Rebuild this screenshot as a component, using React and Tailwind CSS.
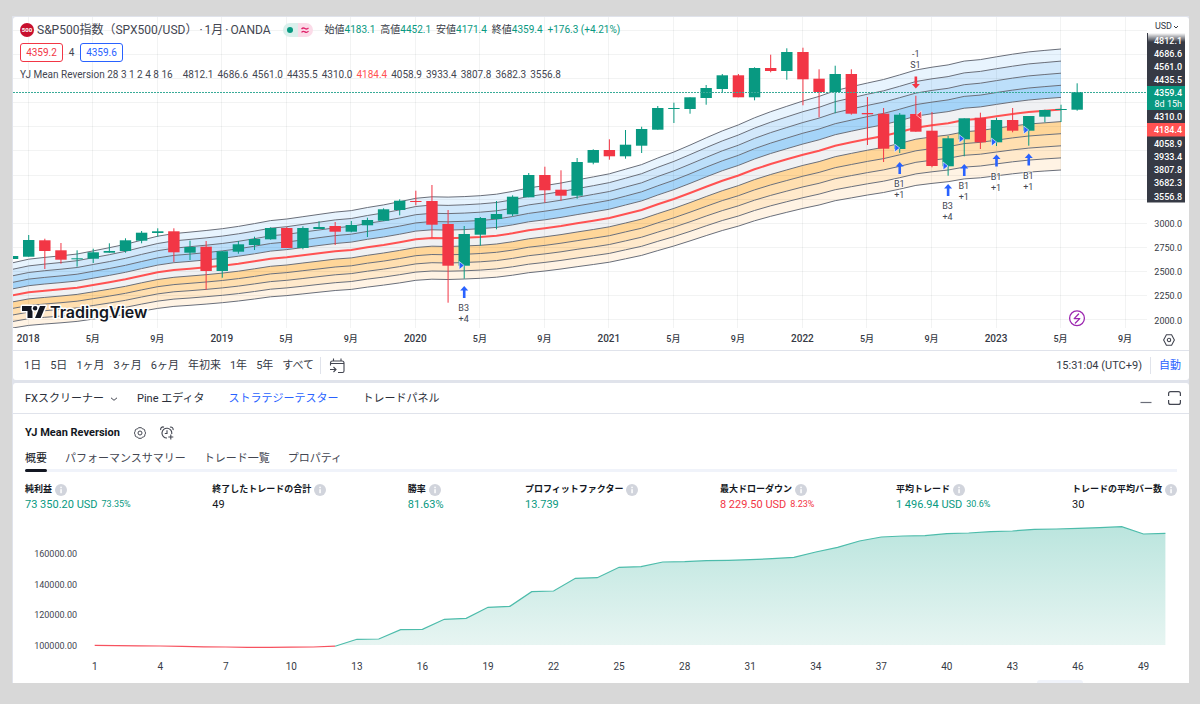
import { clsx } from 'clsx'

const GREEN = '#089981'
const RED = '#f23645'
const BLUE = '#2962ff'

// [open, close, high, low] in chart units, one per month from Dec 2017
const candles = [
  [259, 256, 256, 259], [256.7, 240, 235, 256.7], [240.3, 251, 238.7, 269], [250.3, 259.7, 243, 263.7],
  [259.3, 258.3, 250.3, 266.7], [258.7, 252.3, 248.7, 263], [252.7, 251, 243.3, 252.7], [251, 240.3, 238.3, 252.7],
  [240.7, 232.7, 231, 243.3], [233, 231.3, 228.3, 236.7], [231.3, 252.3, 228.3, 262], [252.7, 247, 240.7, 260],
  [246.7, 271, 241, 289.7], [271, 251.3, 251, 277.7], [251.7, 244.3, 241, 253.7], [245, 239, 236.7, 250],
  [239.3, 228, 227.3, 239.7], [228, 248, 227, 248], [248, 228, 226.3, 249.3], [229, 227, 221.3, 229],
  [226, 231.7, 222, 245], [231.7, 225, 221, 232.3], [225.3, 220, 217.7, 237], [220.7, 209.3, 208.3, 221],
  [210, 200.7, 199.3, 215.3], [201, 202, 190.7, 205.3], [201, 224.7, 185, 237.7], [224, 265.7, 210, 302.7],
  [265.7, 234, 226, 278.7], [234.7, 218, 217, 245.7], [219, 214, 201, 229.3], [214.3, 196.7, 195.3, 216],
  [197.3, 175, 173, 197.3], [175, 190.3, 166.7, 202.7], [189.7, 195.7, 170.3, 200.7], [195.7, 162, 158, 198.7],
  [162.7, 150, 149.3, 164.3], [150, 156.3, 139.3, 159.7], [156.3, 144.7, 130, 158.7], [145.7, 129, 126.7, 153],
  [129.7, 108, 106, 129.7], [108.8, 108, 102.7, 123], [109, 97.3, 97.3, 113.7], [98, 88, 85, 104.7],
  [89, 75.3, 74, 92], [75.3, 97.3, 74, 97.3], [97.3, 68, 67.3, 100.3], [68, 71, 54.7, 72.3],
  [71, 52, 48.3, 79.7], [52, 79.3, 47.7, 105.3], [78.7, 92, 69.3, 117.3], [92, 74, 65.7, 113.3],
  [74, 113.7, 69.3, 114.7], [113, 114.3, 97, 145], [113.7, 148.7, 108, 162], [149, 114.7, 113, 153],
  [114, 131.7, 95.7, 131.7], [130.7, 166, 112, 167.3], [166.3, 138.3, 136, 175.7], [139.3, 118.3, 118.3, 156.3],
  [117.7, 142.3, 112.7, 149], [142.3, 120, 117.7, 146], [120, 130.7, 108, 132.3], [130.7, 116, 116, 145.7],
  [116.7, 110, 109.7, 122.3], [110, 109, 104.7, 122], [109.7, 92, 83.3, 110.7],
]

const mean = [
  295.4, 292.3, 290.7, 289.3, 287.7, 285, 282.3, 279.3, 275.7, 272.3, 270, 268.7, 267.3, 265.7, 263.7, 261.3, 258.7,
  257.3, 255.3, 253.3, 251.3, 250, 247.3, 245, 242.3, 239.3, 238, 238.3, 237.8, 237, 235.7, 233.3, 230.3, 228.3, 226,
  223.3, 220.7, 218, 214, 210, 204.3, 199, 193, 186.7, 180.7, 175.5, 169.3, 164, 159.3, 154.7, 150.7, 145.7, 142.3,
  139, 136, 132, 127.7, 125.3, 123.3, 120, 118.7, 116.3, 114, 112, 110.7, 109.5,
]

const monthX = (i) => 28.7 + 16.13 * i
const priceY = (p) => 320 - (p - 2000) * 0.09633
const yPrice = (y) => 2000 + (320 - y) / 0.09633

// each band sits 3% of the mean away from the previous one
const bandPoints = (k) => mean.map((y, i) => `${monthX(i - 1).toFixed(1)},${priceY(yPrice(y) * (1 + k * 0.03)).toFixed(1)}`)

const bandFills = [
  [4, 5, '#e8f4fe'], [3, 4, '#d2e8fb'], [2, 3, '#bcdffa'], [1, 2, '#a5d4f8'], [-1, 1, '#f0f1f3'],
  [-2, -1, '#ffd699'], [-3, -2, '#ffdfb0'], [-4, -3, '#ffe9cb'], [-5, -4, '#fff3e4'],
]

const months = ['2018', '5月', '9月', '2019', '5月', '9月', '2020', '5月', '9月', '2021', '5月', '9月', '2022', '5月', '9月', '2023', '5月', '9月']

const buys = [
  { i: 27, y: 286, mark: 265.5, label: 'B3', qty: '+4' },
  { i: 54, y: 162, mark: 148, label: 'B1', qty: '+1' },
  { i: 57, y: 184, mark: 166, label: 'B3', qty: '+4' },
  { i: 58, y: 164, mark: 138.7, label: 'B1', qty: '+1' },
  { i: 60, y: 154.5, mark: 142, label: 'B1', qty: '+1' },
  { i: 62, y: 153.5, mark: 130, label: 'B1', qty: '+1' },
]

const priceChips = [
  ['4812.1', 40], ['4686.6', 53], ['4561.0', 66], ['4435.5', 79], ['4310.0', 116.5], ['4058.9', 143],
  ['3933.4', 156], ['3807.8', 169], ['3682.3', 182.5], ['3556.8', 196],
]

const equity = [
  645.4, 645.6, 645.8, 646, 646.4, 646.8, 647, 647.4, 647.4, 647.2, 647, 646.2, 639.3, 639, 629.7, 629.3, 619.3, 618.3,
  607.3, 606.3, 591.7, 591, 578.3, 577.7, 567.3, 566.7, 562, 561.7, 560.7, 560.3, 559.7, 558.7, 557.3, 552, 547.3, 541,
  537, 536, 535.7, 533.7, 533, 531.7, 531, 529.3, 529, 528.3, 527.7, 526.7, 534, 533.3,
]

const metrics = [
  { label: '純利益', value: '73 350.20 USD', pct: '73.35%', tone: 'text-[#089981]' },
  { label: '終了したトレードの合計', value: '49', tone: 'text-[#131722]' },
  { label: '勝率', value: '81.63%', tone: 'text-[#089981]' },
  { label: 'プロフィットファクター', value: '13.739', tone: 'text-[#089981]' },
  { label: '最大ドローダウン', value: '8 229.50 USD', pct: '8.23%', tone: 'text-[#f23645]' },
  { label: '平均トレード', value: '1 496.94 USD', pct: '30.6%', tone: 'text-[#089981]' },
  { label: 'トレードの平均バー数', value: '30', tone: 'text-[#131722]' },
]

function Candle({ i, data }) {
  const [open, close, high, low] = data
  const color = close > open ? RED : GREEN
  const x = monthX(i)
  return (
    <g fill={color}>
      <rect x={x - 0.5} y={high} width="1" height={low - high} />
      <rect x={x - 5.7} y={Math.min(open, close)} width="11.4" height={Math.max(Math.abs(close - open), 1)} />
    </g>
  )
}

function MarkText({ x, y, children }) {
  return (
    <text x={x} y={y} textAnchor="middle" fontSize="9" fill="#434651" stroke="#fff" strokeWidth="2" strokeOpacity="0.6" paintOrder="stroke">{children}</text>
  )
}

function PriceChart() {
  return (
    <svg viewBox="13 17 1176 333" className="block w-full h-auto" role="img" aria-label="S&P500指数">
      <defs>
        <clipPath id="plot"><rect x="13" y="17" width="1134" height="311" /></clipPath>
        <linearGradient id="fade" x1="0" y1="0" x2="0" y2="1">
          <stop offset="0" stopColor="#fff" />
          <stop offset="1" stopColor="#fff" stopOpacity="0" />
        </linearGradient>
      </defs>

      <g clipPath="url(#plot)">
        {bandFills.map(([lo, hi, fill]) => (
          <polygon key={lo} points={[...bandPoints(hi), ...bandPoints(lo).reverse()].join(' ')} fill={fill} />
        ))}
        <g stroke="#2a2e39" strokeOpacity="0.06">
          {months.map((_, n) => <line key={n} x1={Math.round(monthX(n * 4)) - 0.5} x2={Math.round(monthX(n * 4)) - 0.5} y1="17" y2="328" />)}
          {Array.from({ length: 13 }, (_, n) => <line key={n} x1="13" x2="1147" y1={Math.round(priceY(2000 + n * 250)) - 0.5} y2={Math.round(priceY(2000 + n * 250)) - 0.5} />)}
        </g>
        {[5, 4, 3, 2, 1, -1, -2, -3, -4, -5].map(k => (
          <polyline key={k} points={bandPoints(k).join(' ')} fill="none" stroke="#6a6f7a" strokeWidth="1" />
        ))}
        <polyline points={bandPoints(0).join(' ')} fill="none" stroke="#ff5252" strokeWidth="2" />
        {candles.map((c, n) => <Candle key={n} i={n - 1} data={c} />)}
      </g>
      <line x1="13" x2="1147" y1="92.5" y2="92.5" stroke="#39ab98" strokeWidth="1" strokeDasharray="2 1" />

      {buys.map(({ i, y, mark, label, qty }) => {
        const x = monthX(i)
        return (
          <g key={i}>
            <path d={`M${x} ${y} l4 4.5 h-2.7 v7.5 h-2.6 v-7.5 h-2.7 z`} fill={BLUE} />
            <path d={`M${x - 5} ${mark - 4} l5 4 l-5 4 z`} fill={BLUE} stroke="#fff" strokeWidth="0.6" />
            <MarkText x={x - 0.5} y={y + 25}>{label}</MarkText>
            <MarkText x={x - 0.5} y={y + 36}>{qty}</MarkText>
          </g>
        )
      })}
      <MarkText x={monthX(55)} y={57}>-1</MarkText>
      <MarkText x={monthX(55) - 0.5} y={68}>S1</MarkText>
      <path d={`M${monthX(55)} 88.5 l-4 -4.5 h2.7 v-7.5 h2.6 v7.5 h2.7 z`} fill={RED} />
      <path d={`M${monthX(55) + 5.5} 111 l-5 4 l5 4 z`} fill={RED} stroke="#fff" strokeWidth="0.6" />

      {/* watermark */}
      <g fill="#131722" stroke="#fff" strokeWidth="3" strokeLinejoin="round" paintOrder="stroke">
        <path d="M22 306 h10.5 v12 h-5 v-7 h-5.5 z" />
        <circle cx="35.2" cy="308.3" r="2.3" />
        <path d="M40 306 h5.6 l-5 12 h-5.6 z" />
        <text x="50" y="317.5" fontSize="16" fontWeight="600" className="font-['Inter',sans-serif]">TradingView</text>
      </g>

      <g fill="none" stroke="#9c27b0" strokeWidth="1.3">
        <circle cx="1077" cy="318.3" r="7.4" fill="#fff" />
        <path d="M1078.6 314 l-4.4 4.6 h5.6 l-4.4 4.4" strokeLinejoin="round" strokeLinecap="round" />
      </g>

      <g fill="#363a45" textAnchor="middle">
        {months.map((m, n) => (
          <text key={n} x={monthX(n * 4) - 0.5} y="342" fontSize={m.length > 3 ? 10 : 9} fontWeight="500">{m}</text>
        ))}
      </g>

      <g fontSize="9" textAnchor="end">
        {[3000, 2750, 2500, 2250, 2000].map(p => (
          <text key={p} x="1182" y={priceY(p) + 3.5} fill="#363a45">{p.toFixed(1)}</text>
        ))}
        <rect x="1147" y="33" width="38" height="169.5" fill="#363a45" />
        <rect x="1147" y="86" width="38" height="24" fill={GREEN} />
        <rect x="1147" y="123" width="38" height="13.5" fill="#ff5252" />
        <g fill="#fff" fontWeight="500">
          {priceChips.map(([p, y]) => <text key={p} x="1182" y={y + 3.5}>{p}</text>)}
          <text x="1182" y="96">4359.4</text>
          <text x="1182" y="107" fontWeight="400">8d 15h</text>
          <text x="1182" y="133">4184.4</text>
        </g>
        <rect x="1148" y="33" width="38" height="9" fill="url(#fade)" />
      </g>
    </svg>
  )
}

function Quote({ name, value }) {
  return <span><span className="text-[#363a45]">{name}</span>{value}</span>
}

function Legend() {
  return (
    <div className="absolute left-[7px] top-0 text-[10px] text-[#434651] whitespace-nowrap">
      <div className="flex items-center h-[25px]">
        <svg viewBox="0 0 14 14" className="w-[14px] h-[14px]">
          <circle cx="7" cy="7" r="7" fill="#c8102e" />
          <text x="7" y="9.3" textAnchor="middle" fontSize="6" fontWeight="700" fill="#fff">500</text>
        </svg>
        <h1 className="ml-[3px] flex gap-[2px] text-[12px]">
          <span>S&amp;P500指数（SPX500/USD）</span><span>·</span><span>1月</span><span>·</span><span>OANDA</span>
        </h1>
        <div className="ml-3 flex h-[14px] w-[30px] overflow-hidden rounded-full">
          <span className="flex flex-1 items-center justify-center bg-[#daf0ec]"><span className="h-[6px] w-[6px] rounded-full bg-[#089981]" /></span>
          <span className="flex flex-1 items-center justify-center bg-[#fbdbe8]">
            <svg viewBox="0 0 8 8" className="w-2 h-2" fill="none" stroke="#e0246b" strokeWidth="1.3"><path d="M.5 3 q1.7 -1.8 3.5 -.5 t3.5 -.7 M.5 6.4 q1.7 -1.8 3.5 -.5 t3.5 -.7" /></svg>
          </span>
        </div>
        <div className="ml-3 flex gap-[5px] text-[#089981]">
          <Quote name="始値" value="4183.1" />
          <Quote name="高値" value="4452.1" />
          <Quote name="安値" value="4171.4" />
          <Quote name="終値" value="4359.4" />
          <span>+176.3 (+4.21%)</span>
        </div>
      </div>
      <div className="mt-px flex h-[19px] items-stretch">
        <button className="w-[43px] rounded-[3px] border border-[#f23645] bg-white text-[#f23645]">4359.2</button>
        <span className="w-[17px] self-center text-center">4</span>
        <button className="w-[43px] rounded-[3px] border border-[#2962ff] bg-white text-[#2962ff]">4359.6</button>
      </div>
      <div className="mt-[5px] flex h-[15px] items-center">
        <span>YJ Mean Reversion 28 3 1 2 4 8 16</span>
        <span className="ml-[10px] flex gap-1">
          {['4812.1', '4686.6', '4561.0', '4435.5', '4310.0', '4184.4', '4058.9', '3933.4', '3807.8', '3682.3', '3556.8'].map(v => (
            <span key={v} className={clsx(v === '4184.4' && 'text-[#ff5252]')}>{v}</span>
          ))}
        </span>
      </div>
    </div>
  )
}

function InfoIcon() {
  return (
    <svg viewBox="0 0 12 12" className="w-3 h-3">
      <circle cx="6" cy="6" r="6" fill="#d1d4dc" />
      <rect x="5.3" y="2.7" width="1.5" height="1.5" fill="#fff" />
      <rect x="5.3" y="5.2" width="1.5" height="4" fill="#fff" />
    </svg>
  )
}

function EquityChart() {
  const x = (n) => 94.7 + 21.85 * n
  const pts = equity.map((y, n) => `${x(n).toFixed(1)},${y}`)
  return (
    <svg viewBox="13 511 1176 172" className="block w-full h-auto" role="img" aria-label="概要">
      <defs>
        <linearGradient id="equity" gradientUnits="userSpaceOnUse" x1="0" y1="527" x2="0" y2="645">
          <stop offset="0" stopColor="#bbe5de" />
          <stop offset="1" stopColor="#e7f5f2" />
        </linearGradient>
      </defs>
      <polygon points={`337.5,645 ${pts.slice(12).join(' ')} 1165.4,645`} fill="url(#equity)" />
      <polyline points={pts.slice(0, 12).join(' ')} fill="none" stroke="#f7525f" strokeWidth="1.2" />
      <polyline points={pts.slice(11).join(' ')} fill="none" stroke="#4dbcab" strokeWidth="1.2" />
      <g fontSize="9" fill="#434651" textAnchor="end">
        {['160000.00', '140000.00', '120000.00', '100000.00'].map((t, n) => <text key={t} x="77" y={557 + n * 30.7}>{t}</text>)}
      </g>
      <g fontSize="10" fill="#363a45" textAnchor="middle">
        {Array.from({ length: 17 }, (_, n) => <text key={n} x={x(n * 3)} y="670">{n * 3 + 1}</text>)}
      </g>
      <path d="M1037 683 q0 -3 3 -3 h40 q3 0 3 3 z" fill="#f0f3fa" />
    </svg>
  )
}

function RangeBar() {
  return (
    <div className="flex h-[30px] items-center border-t border-[#e0e3eb] pl-[11px] pr-2 text-[11px] text-[#363a45]">
      <div className="flex gap-[9px] pt-0.5">
        {['1日', '5日', '1ヶ月', '3ヶ月', '6ヶ月', '年初来', '1年', '5年', 'すべて'].map(r => <button key={r}>{r}</button>)}
      </div>
      <span className="ml-[6px] h-[17px] w-px bg-[#e0e3eb]" />
      <button aria-label="日付へ移動" className="ml-2">
        <svg viewBox="0 0 16 16" className="w-4 h-4" fill="none" stroke="#434651" strokeWidth="1.1">
          <path d="M1.5 7.5 V5 q0 -2 2 -2 h9.500 q2 0 2 2 v8 q0 1.500 -1.500 1.500 H9 M1.500 5.500 H15 M4.500 .5 v3 M12 .5 v3 M1 11.500 h5.500 M4.500 9 l2.500 2.500 l-2.500 2.500" />
        </svg>
      </button>
      <span className="ml-auto pt-0.5">15:31:04 (UTC+9)</span>
      <span className="ml-2 h-[17px] w-px bg-[#e0e3eb]" />
      <button className="ml-2 pt-0.5 text-[#2962ff]">自動</button>
    </div>
  )
}

function PanelTabs() {
  return (
    <div className="flex h-[31px] items-center border-b border-[#e0e3eb] pl-3 pr-2 text-[11px] text-[#2a2e39]">
      <button className="flex items-center pt-0.5">
        FXスクリーナー
        <svg viewBox="0 0 8 8" className="ml-[6px] w-2 h-2" fill="none" stroke="#434651"><path d="M1 2.800 L4 5.300 L7 2.800" /></svg>
      </button>
      <button className="ml-[19px] pt-0.5">Pine エディタ</button>
      <button className="ml-6 pt-0.5 text-[#2962ff]">ストラテジーテスター</button>
      <button className="ml-6 pt-0.5">トレードパネル</button>
      <button aria-label="最小化" className="ml-auto">
        <svg viewBox="0 0 12 12" className="w-3 h-3" stroke="#6a6d78" strokeWidth="1.2"><path d="M0.500 10.500 h11" /></svg>
      </button>
      <button aria-label="最大化" className="ml-4">
        <svg viewBox="0 0 13 14" className="w-[13px] h-[14px]" fill="none" stroke="#434651" strokeWidth="1.2">
          <path d="M.6 5 V2.600 q0 -2 2 -2 h7.800 q2 0 2 2 V5 M.6 9 v2.400 q0 2 2 2 h7.800 q2 0 2 -2 V9" />
        </svg>
      </button>
    </div>
  )
}

export default function App() {
  const reportTabs = ['概要', 'パフォーマンスサマリー', 'トレード一覧', 'プロパティ']
  return (
    <div className="min-h-screen bg-[#d8d8d8] pt-4 pl-3 pr-[11px] pb-5 font-['Roboto','Noto_Sans_CJK_JP',sans-serif]">
      <main className="border-t border-l border-[#e0e3eb] bg-[#e0e3eb]">
        <section className="relative rounded-[3px] bg-white">
          <PriceChart />
          <Legend />
          <button className="absolute right-[10px] top-0 flex h-5 items-center gap-px text-[9px] text-[#363a45]">
            USD
            <svg viewBox="0 0 6 6" className="w-[6px] h-[6px]" fill="none" stroke="currentColor"><path d="M1 2 L3 4 L5 2" /></svg>
          </button>
          <button aria-label="設定" className="absolute right-[14px] bottom-[34px]">
            <svg viewBox="0 0 12 12" className="w-3 h-3" fill="none" stroke="#434651" strokeWidth="1.1">
              <path d="M3.400 .8 h5.200 L11.400 6 L8.600 11.200 H3.400 L.6 6 z" /><circle cx="6" cy="6" r="1.700" />
            </svg>
          </button>
          <RangeBar />
        </section>

        <section className="mt-[3px] rounded-t-[3px] bg-white">
          <PanelTabs />
          <div className="px-3">
            <div className="flex h-[37px] items-center text-[11px] font-bold text-[#131722]">
              <h2 className="pt-0.5">YJ Mean Reversion</h2>
              <button aria-label="設定" className="ml-[14px]">
                <svg viewBox="0 0 12 12" className="w-3 h-3" fill="none" stroke="#434651">
                  <path d="M4.500 .7 h3 l.8 1.100 1.400 .2 1 1 .2 1.400 .5 .7 v1.800 l-.5 .7 -.2 1.400 -1 1 -1.400 .2 -.8 1.100 h-3 l-.8 -1.100 -1.400 -.2 -1 -1 -.2 -1.400 -.5 -.7 v-1.800 l.5 -.7 .2 -1.400 1 -1 1.400 -.2 z" />
                  <circle cx="6" cy="6" r="2" />
                </svg>
              </button>
              <button aria-label="アラートを追加" className="ml-[14px]">
                <svg viewBox="0 0 14 14" className="w-[14px] h-[14px]" fill="none" stroke="#434651" strokeWidth="1.100">
                  <path d="M7 12 A4.900 4.900 0 1 1 11.700 8 M7 4.200 V7.500 H4.800 M.8 4 A2.300 2.300 0 0 1 4 1.200 M10 1.200 A2.300 2.300 0 0 1 13 4 M10.800 8.500 v5 M8.300 11 h5" />
                </svg>
              </button>
            </div>
            <nav className="flex gap-[18px] border-b-[3px] border-[#f0f3fa] text-[11px] leading-[13px] text-[#434651]">
              {reportTabs.map((t, n) => (
                <button key={t} className={clsx('relative pt-px pb-1', n === 0 && 'text-[#131722]')}>
                  {t}
                  {n === 0 && <span className="absolute inset-x-0 top-full h-[3px] rounded-full bg-[#131722]" />}
                </button>
              ))}
            </nav>
            <dl className="mt-[10px] flex justify-between whitespace-nowrap">
              {metrics.map(m => (
                <div key={m.label}>
                  <dt className="flex h-[15px] items-center gap-[3px] text-[9px] font-bold text-[#131722]">{m.label}<InfoIcon /></dt>
                  <dd className={clsx('flex h-[14px] items-center gap-1 pt-0.5 text-[11px]', m.tone)}>
                    {m.value}
                    {m.pct && <span className="text-[9px]">{m.pct}</span>}
                  </dd>
                </div>
              ))}
            </dl>
          </div>
          <EquityChart />
        </section>
      </main>
    </div>
  )
}
